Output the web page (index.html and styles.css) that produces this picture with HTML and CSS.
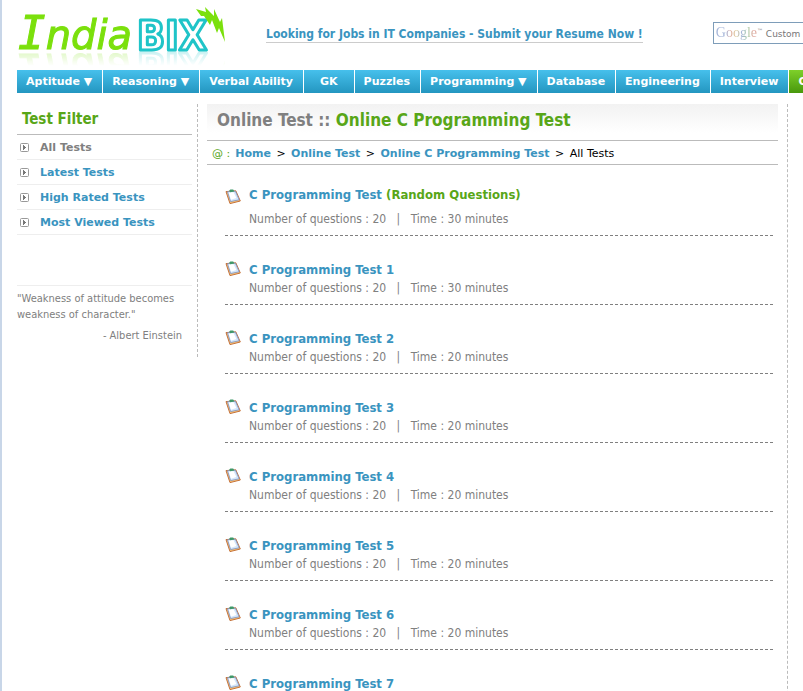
FILE: index.html
```html
<!DOCTYPE html>
<html lang="en">
<head>
    <meta charset="UTF-8">
    <meta name="viewport" content="width=device-width, initial-scale=1.0">
    <title>Online C Programming Test</title>
    <link rel="stylesheet" href="styles.css">
</head>
<body>
<!-- Shared icons -->
<svg class="sprite" aria-hidden="true">
    <symbol id="arrow" viewBox="0 0 9 9">
        <rect x="0.5" y="0.5" width="8" height="8" rx="1" fill="#fff" stroke="#999"/>
        <path d="M3 2h1v1h1v1h1v1h-1v1h-1v1h-1z" fill="#777"/>
    </symbol>
    <symbol id="clipboard" viewBox="0 0 16 16">
        <path d="M1 2.6 10.8 1.8 15.3 12 5 14.6Z" fill="#ffc773" stroke="#c4713a" stroke-width="1" stroke-linejoin="round"/>
        <path d="M2.5 2.8 10.4 2.2 14.2 10.8 5.6 12.6Z" fill="#d3e6fa" stroke="#7a8fc4" stroke-width="0.8" stroke-linejoin="round"/>
        <path d="M3.6 3.6 8.6 3.2 11.4 9 6 10.8Z" fill="#fff"/>
        <path d="M4.2 1.6 5.4.6 8.2.6 9.4 2.6 5 3.2Z" fill="#3e9868"/>
    </symbol>
</svg>

<div class="page">
    <header class="header">
        <a class="logo" href="#" aria-label="IndiaBIX">
            <svg width="214" height="52" viewBox="0 0 214 52">
                <text class="logo-india" x="1" y="43"><tspan class="logo-i">I</tspan>ndia</text>
                <text class="logo-bix" x="120" y="44">BIX</text>
                <path d="M179 3 189 6 188 1 197 10 197 3 203 16 205 12 208 36 202 22 200 27 195 14 193 19 187 10 184 10Z" fill="#7be00c"/>
            </svg>
        </a>
        <a class="promo" href="#">Looking for Jobs in IT Companies - Submit your Resume Now !</a>
        <form class="search">
            <input type="text" id="search">
            <label for="search"><span class="google">Google</span><sup>™</sup> Custom Search</label>
        </form>
    </header>

    <nav class="nav">
        <a href="#">Aptitude <span>▼</span></a>
        <a href="#">Reasoning <span>▼</span></a>
        <a href="#">Verbal Ability</a>
        <a class="short" href="#">GK</a>
        <a href="#">Puzzles</a>
        <a href="#">Programming <span>▼</span></a>
        <a href="#">Database</a>
        <a href="#">Engineering</a>
        <a href="#">Interview</a>
        <a class="current" href="#">C</a>
    </nav>

    <div class="columns">
        <aside class="sidebar">
            <h2>Test Filter</h2>
            <ul class="filter">
                <li><svg><use href="#arrow"/></svg><a class="active" href="#">All Tests</a></li>
                <li><svg><use href="#arrow"/></svg><a href="#">Latest Tests</a></li>
                <li><svg><use href="#arrow"/></svg><a href="#">High Rated Tests</a></li>
                <li><svg><use href="#arrow"/></svg><a href="#">Most Viewed Tests</a></li>
            </ul>
            <div class="quote">
                <p>"Weakness of attitude becomes weakness of character."</p>
                <p class="author">- Albert Einstein</p>
            </div>
        </aside>

        <main class="main">
            <h1>Online Test :: <span>Online C Programming Test</span></h1>
            <div class="breadcrumb">
                <span class="at">@ :</span><a href="#">Home</a> &gt; <a href="#">Online Test</a> &gt; <a href="#">Online C Programming Test</a> &gt; <span class="here">All Tests</span>
            </div>
            <ul class="tests">
                <li class="random">
                    <svg><use href="#clipboard"/></svg>
                    <div>
                        <a href="#">C Programming Test <span>(Random Questions)</span></a>
                        <p>Number of questions : 20 <i>|</i> Time : 30 minutes</p>
                    </div>
                </li>
                <li>
                    <svg><use href="#clipboard"/></svg>
                    <div>
                        <a href="#">C Programming Test 1</a>
                        <p>Number of questions : 20 <i>|</i> Time : 30 minutes</p>
                    </div>
                </li>
                <li>
                    <svg><use href="#clipboard"/></svg>
                    <div>
                        <a href="#">C Programming Test 2</a>
                        <p>Number of questions : 20 <i>|</i> Time : 20 minutes</p>
                    </div>
                </li>
                <li>
                    <svg><use href="#clipboard"/></svg>
                    <div>
                        <a href="#">C Programming Test 3</a>
                        <p>Number of questions : 20 <i>|</i> Time : 20 minutes</p>
                    </div>
                </li>
                <li>
                    <svg><use href="#clipboard"/></svg>
                    <div>
                        <a href="#">C Programming Test 4</a>
                        <p>Number of questions : 20 <i>|</i> Time : 20 minutes</p>
                    </div>
                </li>
                <li>
                    <svg><use href="#clipboard"/></svg>
                    <div>
                        <a href="#">C Programming Test 5</a>
                        <p>Number of questions : 20 <i>|</i> Time : 20 minutes</p>
                    </div>
                </li>
                <li>
                    <svg><use href="#clipboard"/></svg>
                    <div>
                        <a href="#">C Programming Test 6</a>
                        <p>Number of questions : 20 <i>|</i> Time : 20 minutes</p>
                    </div>
                </li>
                <li>
                    <svg><use href="#clipboard"/></svg>
                    <div>
                        <a href="#">C Programming Test 7</a>
                    </div>
                </li>
            </ul>
        </main>
    </div>
</div>
</body>
</html>
```
FILE: styles.css
```css
* {
    box-sizing: border-box;
}

html {
    overflow: hidden;
}

body {
    margin: 0;
    height: 100vh;
    overflow: hidden;
    border-left: 2px solid #c8d6e8;
    background-color: white;
    font-family: Tahoma, "DejaVu Sans Condensed", "DejaVu Sans", sans-serif;
    font-size: 12px;
    color: #808080;
}

a {
    color: #3a94bf;
    text-decoration: none;
}

h1, h2, p, ul {
    margin: 0;
    padding: 0;
}

ul {
    list-style: none;
}

.sprite {
    display: none;
}

.page {
    padding-left: 15px;
}

/* Header */
.header {
    display: flex;
    align-items: flex-start;
    height: 70px;
    padding-top: 6px;
}

.logo {
    flex: none;
    width: 249px;
}

.logo svg {
    display: block;
    overflow: visible;
    -webkit-box-reflect: below -13px linear-gradient(transparent 60%, rgba(0, 0, 0, 0.35));
}

.logo-india {
    font-family: "DejaVu Sans", sans-serif;
    font-size: 40px;
    font-style: italic;
    fill: #7be00c;
    stroke: #7be00c;
    stroke-width: 1px;
}

.logo-i {
    font-family: "DejaVu Sans Mono", monospace;
    font-size: 46px;
}

.logo-bix {
    font-family: "DejaVu Sans Condensed", "DejaVu Sans", sans-serif;
    font-size: 41px;
    font-weight: bold;
    fill: #fff;
    stroke: #1fc4c8;
    stroke-width: 3px;
    stroke-linejoin: round;
}

.promo {
    flex: none;
    margin-top: 21px;
    border-bottom: 1px solid #ccc;
    line-height: 15px;
    font-weight: bold;
}

.search {
    position: relative;
    flex: 1;
    min-width: 90px;
    margin: 16px 0 0 70px;
    overflow: hidden;
}

.search input {
    display: block;
    width: 220px;
    height: 22px;
    border: 1px solid #7e9db9;
}

.search label {
    position: absolute;
    top: 1px;
    left: 3px;
    line-height: 20px;
    font-family: Verdana, "DejaVu Sans", sans-serif;
    font-size: 9px;
    color: #777;
    white-space: nowrap;
}

.search sup {
    font-size: 6px;
    line-height: 1px;
}

.google {
    font-family: "Liberation Serif", serif;
    font-size: 14px;
    background: linear-gradient(90deg, #a5b5d8 25%, #dfaaa0 35%, #ddcf9c 50%, #a5b5d8 62%, #a8cfa8 78%, #dfaaa0 90%);
    -webkit-background-clip: text;
    color: transparent;
}

/* Navigation */
.nav {
    display: flex;
    gap: 1px;
    overflow: hidden;
    font-family: Verdana, "DejaVu Sans", sans-serif;
    font-size: 11px;
    font-weight: bold;
    line-height: 23px;
}

.nav a {
    flex: none;
    height: 23px;
    padding: 0 10px 0 9px;
    background: linear-gradient(#46c0ec, #2496c0);
    color: #fff;
    white-space: nowrap;
}

.nav .short {
    padding: 0 16px;
}

.nav .current {
    background: linear-gradient(#7ed02a, #48980c);
}

/* Columns */
.columns {
    display: flex;
    align-items: flex-start;
    margin-top: 11px;
}

.sidebar {
    flex: none;
    width: 181px;
    height: 253px;
    padding-right: 5px;
    border-right: 1px dashed #bbb;
}

.sidebar h2 {
    height: 31px;
    padding-left: 5px;
    border-bottom: 1px solid #bbb;
    line-height: 31px;
    font-family: "Trebuchet MS", "DejaVu Sans Condensed", sans-serif;
    font-size: 15px;
    color: #58a618;
}

.filter li {
    display: flex;
    align-items: center;
    gap: 11px;
    height: 25px;
    padding-left: 3px;
    border-bottom: 1px solid #eee;
    font-family: Verdana, "DejaVu Sans", sans-serif;
    font-size: 11px;
    font-weight: bold;
}

.filter svg {
    width: 9px;
    height: 9px;
}

.filter .active {
    color: #808080;
}

.quote {
    margin-top: 50px;
    padding-top: 5px;
    border-top: 1px solid #eee;
    font-size: 11px;
    line-height: 16px;
}

.author {
    margin-top: 5px;
    padding-right: 10px;
    text-align: right;
}

.main {
    flex: 1;
    min-width: 0;
    min-height: 620px;
    margin: 0 15px 0 9px;
    padding-right: 9px;
    border-right: 1px dashed #bbb;
}

.main h1 {
    height: 37px;
    padding-left: 10px;
    border-bottom: 1px solid #bbb;
    background: linear-gradient(#f2f2f2, #fff 80%);
    line-height: 32px;
    font-size: 17px;
}

.main h1 span,
.tests span {
    color: #58a618;
}

.breadcrumb {
    height: 24px;
    padding-left: 5px;
    border-bottom: 1px solid #bbb;
    line-height: 25px;
    font-family: Verdana, "DejaVu Sans", sans-serif;
    font-size: 11px;
    color: #000;
}

.breadcrumb a {
    margin: 0 2px;
    font-weight: bold;
}

.breadcrumb .at {
    margin-right: 3px;
    color: #58a618;
}

.breadcrumb .here {
    margin-left: 2px;
}

/* Test list */
.tests {
    padding: 2px 5px 0 18px;
}

.tests li {
    display: flex;
    gap: 8px;
    height: 69px;
    padding-top: 25px;
    border-bottom: 1px dashed #808080;
    line-height: 18px;
}

.tests svg {
    flex: none;
    width: 16px;
    height: 16px;
}

.tests a {
    display: block;
    font-size: 13px;
    font-weight: bold;
}

.tests i {
    margin: 0 7px;
    font-style: normal;
}

.tests .random {
    padding-top: 19px;
}

.random p {
    margin-top: 6px;
}

.random svg {
    margin-top: 3px;
}
```
